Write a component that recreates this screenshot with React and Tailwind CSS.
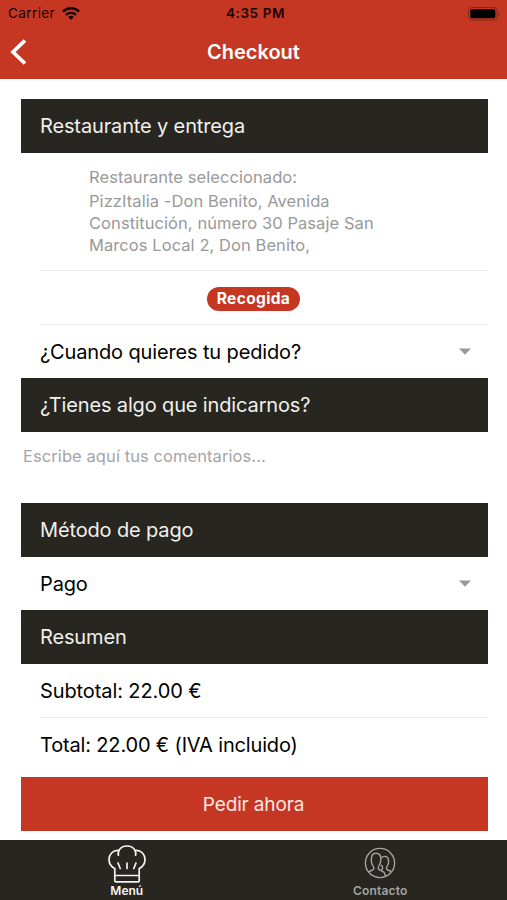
import React from 'react'

const SectionTitle = ({ children }) => (
  <h2 className="h-[54px] shrink-0 bg-[#272621] pl-[19px] flex items-center text-[20px] tracking-[-0.14px] text-[#f1f0ec]">
    {children}
  </h2>
)

const SelectRow = ({ children }) => (
  <button className="h-[53px] shrink-0 pl-[19px] pr-[17px] flex items-center justify-between text-[20px] tracking-[-0.14px] text-black text-left">
    <span>{children}</span>
    <svg width="12" height="7" viewBox="0 0 12 7" fill="#999999">
      <path d="M0 0.5h12L6 6.7z" />
    </svg>
  </button>
)

const WifiIcon = () => (
  <svg width="18" height="13" viewBox="0 0 18 13" fill="none" stroke="#160302" strokeWidth="2.4">
    <path d="M1 4.6a11.4 11.4 0 0 1 16 0" />
    <path d="M4 7.9a7.1 7.1 0 0 1 10 0" />
    <path d="M9 12.8L6.2 10a4 4 0 0 1 5.6 0z" fill="#160302" stroke="none" />
  </svg>
)

const BatteryIcon = () => (
  <svg width="33" height="14" viewBox="0 0 33 14">
    <rect x="0.5" y="0.5" width="28.5" height="12.5" rx="3.3" fill="none" stroke="#84271a" />
    <rect x="2.3" y="2.3" width="25" height="9" rx="1.6" fill="#000" />
    <path d="M30.5 4.8c1.8.7 1.8 3.3 0 4z" fill="#84271a" />
  </svg>
)

const ChefHatIcon = () => (
  <svg width="38" height="38" viewBox="0 0 38 38" fill="none" stroke="#f4f4f2" strokeWidth="1.7" strokeLinecap="round" strokeLinejoin="round">
    <path d="M6.8 36V23.6C3.2 21.8 1 18.6 1 14.5 1 9.3 4.8 5.4 9.8 5.4c.4 0 .8 0 1.2.1C12.3 2.8 15.3 1 19 1s6.7 1.8 8 4.5c.4-.1.8-.1 1.2-.1 5 0 8.8 3.9 8.800 9.100 0 4.100-2.200 7.300-5.800 9.100V36c0 .6-.3.9-.9.9H7.700c-.6 0-.9-.3-.9-.9z" />
    <path d="M6.8 30.5h24.400" />
    <path d="M11 5.500c-.8 1.500-1 3-.6 4.700M27 5.500c.8 1.500 1 3 .6 4.700" />
    <path d="M19 18v5.500M10 18l2.200 5.500M28 18l-2.200 5.500" />
  </svg>
)

const ContactIcon = () => (
  <svg width="32" height="32" viewBox="0 0 32 32" fill="none" stroke="#a3a3a0" strokeWidth="1.4" strokeLinejoin="round">
    <circle cx="16" cy="16" r="14.6" />
    <path d="M4.500 25.200c1.300-1.600 5-1.500 5.400-3.700.3-1.500-1-2.300-1.700-4C7.500 15.700 7.200 14 7.300 12c.1-3.600 1.700-5.800 4.700-5.800s4.800 2.200 4.900 5.800c.1 2-.4 3.700-1.200 5.500-.7 1.700-1.800 2.500-1.500 4 .5 2.200 4.600 2 6 4.200.7 1.100 1 2.400 1.100 3.800" />
    <path d="M17.200 11.200c.8-1.200 1.900-1.800 3.300-1.800 2.600 0 4.100 1.900 4.100 4.800 0 2.100-.6 3.700-1.400 5-.6 1-.9 2-.5 2.900.7 1.500 3 1.200 4.400 2.500M17.200 17.700c.6 1.400 1.600 2.300 1.400 3.500-.1.700-.6 1.200-1.300 1.600" />
  </svg>
)

const Checkout = () => {
  return (
    <div className="w-full h-[900px] flex flex-col bg-white overflow-hidden font-['Inter','Liberation_Sans',sans-serif]">
      {/* Header */}
      <header className="h-[79px] shrink-0 bg-[#c53722] flex flex-col">
        <div className="h-[27px] pl-2 pr-[6px] grid grid-cols-[1fr_auto_1fr] items-center text-[13.5px] text-[#160302]">
          <div className="flex items-center gap-[7px]">
            <span className="tracking-[0.4px]">Carrier</span>
            <WifiIcon />
          </div>
          <span className="ml-[2px] font-semibold tracking-[0.6px]">4:35 PM</span>
          <div className="flex justify-end">
            <BatteryIcon />
          </div>
        </div>
        <div className="h-[50px] px-[10px] grid grid-cols-[1fr_auto_1fr] items-center">
          <button aria-label="Volver">
            <svg width="18" height="26" viewBox="0 0 18 26" fill="none" stroke="#fff" strokeWidth="3.8">
              <path d="M15 1.5L3 13l12 11.5" />
            </svg>
          </button>
          <h1 className="text-[20px] font-semibold text-white">Checkout</h1>
        </div>
      </header>

      {/* Form */}
      <main className="flex-1 flex flex-col pt-5 pl-[21px] pr-[19px]">
        <SectionTitle>Restaurante y entrega</SectionTitle>
        <div className="h-[118px] shrink-0 ml-[19px] pl-[49px] pt-[13px] border-b border-[#e9e9e9] text-[16.5px] leading-[22px] tracking-[0.07px] text-[#999999]">
          <p className="mb-[2px]">Restaurante seleccionado:</p>
          <p>PizzItalia -Don Benito, Avenida<br />Constitución, número 30 Pasaje San<br />Marcos Local 2, Don Benito,</p>
        </div>
        <div className="h-[54px] shrink-0 ml-[19px] pr-[21px] flex items-center justify-center border-b border-[#e9e9e9]">
          <span className="w-[93px] h-6 mt-[2px] rounded-full bg-[#c53722] flex items-center justify-center text-[15.5px] tracking-[0.35px] font-bold text-white">Recogida</span>
        </div>
        <SelectRow>¿Cuando quieres tu pedido?</SelectRow>
        <SectionTitle>¿Tienes algo que indicarnos?</SectionTitle>
        <textarea
          placeholder="Escribe aquí tus comentarios..."
          className="h-[71px] shrink-0 pl-[2px] pt-[12px] resize-none outline-none text-[16.5px] leading-[24px] tracking-[0.08px] placeholder:text-[#a5a5a5]"
        />
        <SectionTitle>Método de pago</SectionTitle>
        <SelectRow>Pago</SelectRow>
        <SectionTitle>Resumen</SectionTitle>
        <p className="h-[54px] shrink-0 ml-[19px] flex items-center border-b border-[#e9e9e9] text-[20px] tracking-[-0.1px] text-black">Subtotal: 22.00 €</p>
        <p className="h-[54px] shrink-0 ml-[19px] flex items-center text-[20px] tracking-[-0.16px] text-black">Total: 22.00 € (IVA incluido)</p>
        <button className="h-[54px] shrink-0 mt-[5px] pt-[2px] pr-[2px] bg-[#c53722] text-[19px] tracking-[-0.15px] text-[#fbe9e4]">Pedir ahora</button>
      </main>

      {/* Bottom tabs */}
      <nav className="h-[60px] shrink-0 bg-[#272621] grid grid-cols-2 text-[12px] font-semibold leading-[14px]">
        <button className="flex flex-col items-center justify-end pb-[2px] gap-[1px] text-[#f4f4f2]">
          <ChefHatIcon />
          Menú
        </button>
        <button className="flex flex-col items-center justify-end pb-[2px] gap-[5px] tracking-[0.15px] text-[#a3a3a0]">
          <ContactIcon />
          Contacto
        </button>
      </nav>
    </div>
  )
}

export default Checkout
